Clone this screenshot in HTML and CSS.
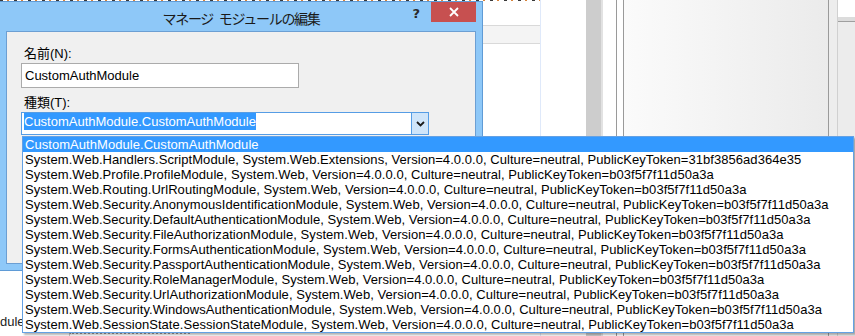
FILE: index.html
```html
<!DOCTYPE html>
<html lang="ja">
<head>
<meta charset="utf-8" />
<title>マネージ モジュールの編集</title>
<link rel="stylesheet" href="styles.css">
</head>
<body>
<div class="desktop">

  <!-- 後ろの IIS マネージャー -->
  <div class="backApp">
    <div class="mainPane">
      <div class="iconStrip"></div>
      <div class="toolBand"></div>
      <div class="listArea">
        <div class="bgRow"><span class="cut">dule</span></div>
        <div class="bgRow bgRowLast"><span class="cut"></span><span class="path"></span></div>
      </div>
    </div>
    <div class="colLine"></div>
    <div class="vScroll"></div>
    <div class="gutter"></div>
    <div class="framePane">
      <div class="gradPanel"></div>
    </div>
    <div class="rail"></div>
    <div class="corner"><div class="cornerTop"></div></div>
  </div>

  <!-- ダイアログ -->
  <div class="dialog">
    <div class="titleBar">
      <span></span>
      <span class="titleText">マネージ モジュールの編集</span>
      <div class="titleBtns">
        <span class="helpBtn">?</span>
        <a class="closeBtn" href="javascript:;" title="閉じる">
          <svg width="10" height="10" viewBox="0 0 10 10"><path d="M1 1 L9 9 M9 1 L1 9" stroke="#fff" stroke-width="1.8" fill="none"/></svg>
        </a>
      </div>
    </div>
    <div class="dlgBody">
      <p class="label">名前(N):</p>
      <div class="textBox">CustomAuthModule</div>
      <p class="label label2">種類(T):</p>
      <div class="combo">
        <div class="comboText"><span class="sel">CustomAuthModule.CustomAuthModule</span></div>
        <div class="comboBtn">
          <svg width="9" height="6" viewBox="0 0 9 6"><path d="M1 1 L4.5 4.5 L8 1" stroke="#1a1a1a" stroke-width="1.8" fill="none"/></svg>
        </div>
      </div>
    </div>
  </div>

  <!-- 開いたドロップダウン -->
  <ul class="dropList">
    <li class="cur">CustomAuthModule.CustomAuthModule</li>
    <li>System.Web.Handlers.ScriptModule, System.Web.Extensions, Version=4.0.0.0, Culture=neutral, PublicKeyToken=31bf3856ad364e35</li>
    <li>System.Web.Profile.ProfileModule, System.Web, Version=4.0.0.0, Culture=neutral, PublicKeyToken=b03f5f7f11d50a3a</li>
    <li>System.Web.Routing.UrlRoutingModule, System.Web, Version=4.0.0.0, Culture=neutral, PublicKeyToken=b03f5f7f11d50a3a</li>
    <li>System.Web.Security.AnonymousIdentificationModule, System.Web, Version=4.0.0.0, Culture=neutral, PublicKeyToken=b03f5f7f11d50a3a</li>
    <li>System.Web.Security.DefaultAuthenticationModule, System.Web, Version=4.0.0.0, Culture=neutral, PublicKeyToken=b03f5f7f11d50a3a</li>
    <li>System.Web.Security.FileAuthorizationModule, System.Web, Version=4.0.0.0, Culture=neutral, PublicKeyToken=b03f5f7f11d50a3a</li>
    <li>System.Web.Security.FormsAuthenticationModule, System.Web, Version=4.0.0.0, Culture=neutral, PublicKeyToken=b03f5f7f11d50a3a</li>
    <li>System.Web.Security.PassportAuthenticationModule, System.Web, Version=4.0.0.0, Culture=neutral, PublicKeyToken=b03f5f7f11d50a3a</li>
    <li>System.Web.Security.RoleManagerModule, System.Web, Version=4.0.0.0, Culture=neutral, PublicKeyToken=b03f5f7f11d50a3a</li>
    <li>System.Web.Security.UrlAuthorizationModule, System.Web, Version=4.0.0.0, Culture=neutral, PublicKeyToken=b03f5f7f11d50a3a</li>
    <li>System.Web.Security.WindowsAuthenticationModule, System.Web, Version=4.0.0.0, Culture=neutral, PublicKeyToken=b03f5f7f11d50a3a</li>
    <li>System.Web.SessionState.SessionStateModule, System.Web, Version=4.0.0.0, Culture=neutral, PublicKeyToken=b03f5f7f11d50a3a</li>
  </ul>

</div>
</body>
</html>
```

FILE: styles.css
```css
body, ul, p { padding: 0; margin: 0; }
li { list-style: none; }
a { text-decoration: none; outline: none; }
body { background: #fff; font-family: "Liberation Sans", "Noto Sans CJK JP", sans-serif; font-size: 13px; color: #000; }

.desktop { position: relative; width: 855px; height: 336px; overflow: hidden; }

/* background application */
.backApp { display: flex; height: 336px; }
.mainPane { width: 540px; display: flex; flex-direction: column; }
.iconStrip { height: 1px; background: repeating-linear-gradient(90deg, #3a3a3a 0 3px, #fff 3px 7px, #d8843c 7px 9px, #fff 9px 14px); }
.toolBand { height: 17px; margin-top: 24px; background: #f4f4f4; border-top: 1px solid #d9d9d9; border-bottom: 1px solid #d9d9d9; }
.listArea { margin-top: auto; }
.bgRow { display: flex; height: 21px; line-height: 21px; color: #222; }
.bgRowLast { height: 5px; overflow: hidden; margin-bottom: -1px; }
.bgRow .cut { width: 21px; white-space: nowrap; }
.bgRow .path { width: 120px; margin-left: 48px; border-left: 1px solid #c8c8c8; border-top: 2px dotted #9a9a9a; }
.colLine { width: 45px; border-left: 1px solid #dfe9fa; }
.vScroll { width: 15px; background: #cdcdcd; }
.gutter { width: 13px; border-left: 2px solid #e2e2e2; }
.framePane { width: 206px; border-left: 1px solid #9a9a9a; padding-left: 6px; display: flex; }
.gradPanel { flex: 1; border-left: 1px solid #9a9a9a; border-right: 1px solid #9a9a9a; background: linear-gradient(90deg, #fbfbfb, #ebebeb); }
.rail { width: 8px; background: #ededed; border-right: 1px solid #d0d0d0; }
.corner { flex: 1; background: #ececec; }
.cornerTop { height: 17px; background: #fff; border-bottom: 4px solid #dcdcdc; box-shadow: 0 1px 0 #9f9f9f; }

/* dialog window */
.dialog { position: absolute; left: -1px; top: 1px; width: 484px; height: 270px; box-sizing: border-box; border: 1px solid #5f9bd6; background: #8ec8f8; display: flex; flex-direction: column; }
.titleBar { height: 29px; display: grid; grid-template-columns: 1fr auto 1fr; }
.titleText { font-family: "Noto Sans CJK JP", sans-serif; font-size: 14px; letter-spacing: -1.3px; word-spacing: 4px; line-height: 16px; padding-top: 8px; color: #1a1a1a; }
.titleBtns { display: flex; justify-content: flex-end; align-items: flex-start; gap: 11px; margin-right: 6px; }
.helpBtn { font-family: "DejaVu Sans", sans-serif; font-weight: bold; font-size: 13px; line-height: 14px; padding-top: 5px; color: #2a2a2a; }
.closeBtn { width: 45px; height: 20px; background: #c75050; display: flex; align-items: center; justify-content: center; }
.dlgBody { flex: 1; margin: 0 6px 6px; border: 1px solid #6c9fd3; background: #f0f0f0; padding: 14px 0 0 14px; }

.label { line-height: 15px; padding-left: 3px; margin-bottom: 2px; }
.label2 { margin-top: 7px; }
.textBox { width: 278px; height: 25px; box-sizing: border-box; border: 1px solid #ababab; background: #fff; padding-left: 3px; line-height: 23px; }
.combo { width: 408px; height: 23px; box-sizing: border-box; border: 1px solid #569de5; background: #fff; display: flex; }
.comboText { flex: 1; padding-left: 2px; }
.comboText .sel { display: inline-block; background: #3399ff; color: #fff; line-height: 17px; }
.comboBtn { width: 16px; background: #cfe5fa; border-left: 1px solid #569de5; display: flex; align-items: center; justify-content: center; }

/* dropped list */
.dropList { position: absolute; left: 22px; top: 136px; width: 832px; box-sizing: border-box; border: 1px solid #64a1e4; background: #fff; box-shadow: 2px 2px 2px rgba(0, 0, 0, 0.3); }
.dropList li { height: 15px; line-height: 15px; padding-left: 2px; white-space: nowrap; overflow: hidden; letter-spacing: 0.05px; }
.dropList li.cur { background: #3399ff; color: #fff; }
```
